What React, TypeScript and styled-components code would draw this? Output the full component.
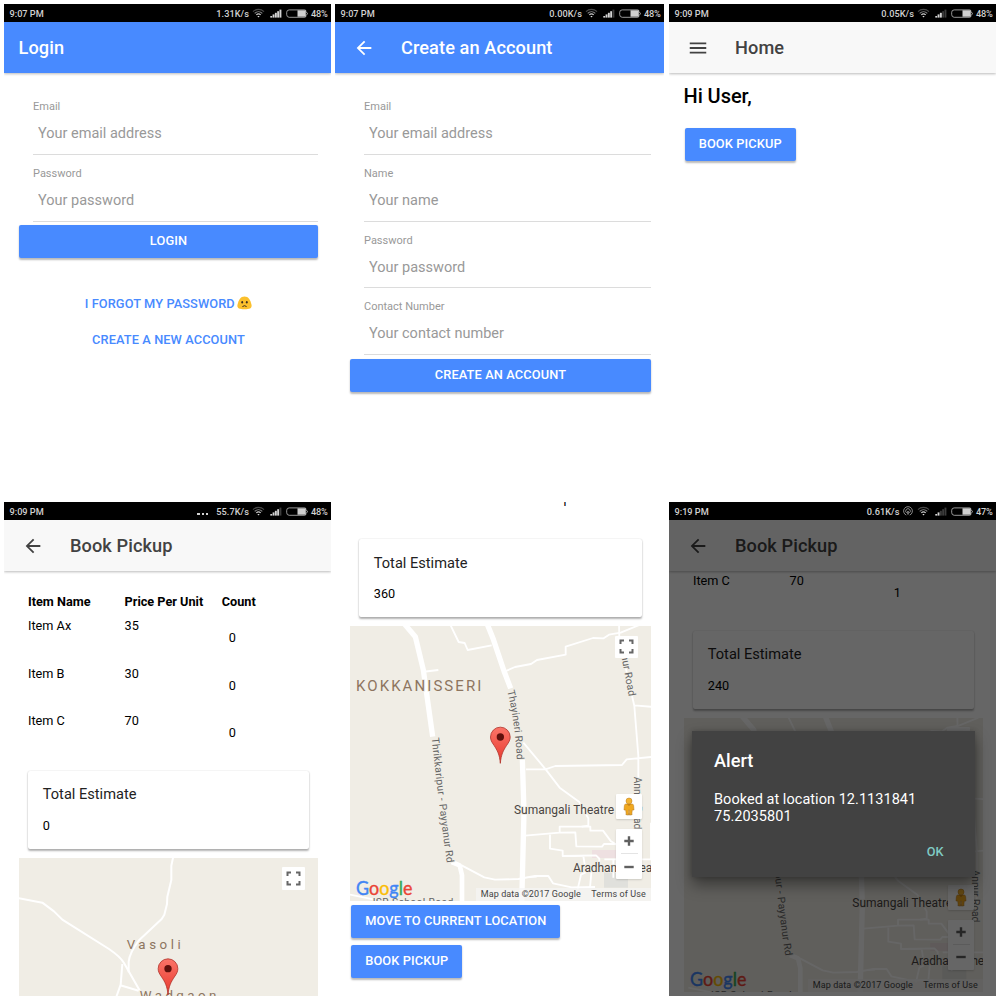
import React from "react";
import styled, { createGlobalStyle, css } from "styled-components";

const GlobalStyle = createGlobalStyle`
  * { box-sizing: border-box; }
  body { margin: 0; background: #fff; font-family: Roboto, "Noto Sans", sans-serif; color: #000; }
`;

const BLUE = "#488aff";

const Board = styled.main`
  width: 1000px;
  height: 1000px;
  padding: 4px;
  overflow: hidden;
  display: grid;
  grid-template-columns: 331px 334px 327px;
  grid-template-rows: 498px 494px;
`;

const Screen = styled.section<{ $w?: number }>`
  position: relative;
  width: ${(p) => p.$w ?? 327}px;
  height: 494px;
  overflow: hidden;
  display: flex;
  flex-direction: column;
  background: #fff;
`;

/* ---------- status bar ---------- */

const StatusRow = styled.div`
  flex: none;
  height: 18px;
  padding: 0 4px 0 5.5px;
  background: #000;
  color: #d2d2d2;
  font-size: 9.2px;
  font-weight: 500;
  line-height: 17px;
  display: flex;
  align-items: center;
`;

const Clock = styled.span`
  flex: 1;
`;

const Dots = styled.span`
  display: flex;
  gap: 2px;
  margin: 5px 8px 0 0;
  i {
    width: 2.4px;
    height: 2px;
    background: #d2d2d2;
  }
`;

const Speed = styled.span`
  margin-right: 3px;
  letter-spacing: 0.05px;
`;

const StatusIcon = styled.svg<{ $gap: number }>`
  flex: none;
  display: block;
  margin-right: ${(p) => p.$gap}px;
`;

const Percent = styled.span`
  width: 16px;
  letter-spacing: -0.2px;
  white-space: nowrap;
`;

type StatusProps = { time: string; speed: string; bars: number; percent: string; dots?: boolean; hotspot?: boolean };

function StatusBar({ time, speed, bars, percent, dots, hotspot }: StatusProps) {
  return (
    <StatusRow>
      <Clock>{time}</Clock>
      {dots && (
        <Dots>
          <i />
          <i />
          <i />
        </Dots>
      )}
      <Speed>{speed}</Speed>
      {hotspot && (
        <StatusIcon $gap={4.5} width="10" height="10" viewBox="0 0 10 10" fill="none" stroke="#aaa" strokeWidth="0.8">
          <path d="M3.3 9.1a4.4 4.4 0 1 1 3.4 0" />
          <path d="M3.7 6.9a2.3 2.3 0 1 1 2.6 0" />
          <path d="M5 5v3.6" strokeWidth="1.3" />
        </StatusIcon>
      )}
      <StatusIcon $gap={5} width="13" height="10" viewBox="0 0 13 10" fill="none" strokeWidth="1.1">
        <path d="M1 3.6a8 8 0 0 1 11 0" stroke="#4a4a4a" />
        <path d="M2.7 5.3a5.6 5.6 0 0 1 7.6 0" stroke="#8a8a8a" />
        <path d="M4.3 6.9a3.3 3.3 0 0 1 4.4 0" stroke="#ccc" />
        <path d="M5.3 7.9h2.4L6.5 9.4z" fill="#ddd" />
      </StatusIcon>
      <StatusIcon $gap={4} width="12" height="9" viewBox="0 0 12 9">
        {[0, 1, 2, 3, 4].map((i) => (
          <rect
            key={i}
            x={i * 2.3 + 0.3}
            y={7 - i * 1.6}
            width="1.9"
            height={1.6 + i * 1.6}
            fill={i < bars ? "#d4d4d4" : "#3c3c3c"}
          />
        ))}
      </StatusIcon>
      <StatusIcon $gap={3} width="22" height="9" viewBox="0 0 22 9">
        <path
          d="M3.2.9h15.6q1 0 1 1v1l1.5 1v1.4l-1.5 1v1q0 1-1 1H3.2Q.7 8.1.7 5.7V3.3Q.7.9 3.2.9z"
          fill="none"
          stroke="#a8a8a8"
          strokeWidth="0.9"
        />
        <rect x="11.5" y="1.3" width="8.3" height="6.4" fill="#d0d0d0" />
      </StatusIcon>
      <Percent>{percent}</Percent>
    </StatusRow>
  );
}

/* ---------- toolbar ---------- */

const Bar = styled.header<{ $primary?: boolean }>`
  flex: none;
  position: relative;
  z-index: 1;
  height: ${(p) => (p.$primary ? 51 : 51.4)}px;
  display: flex;
  align-items: center;
  background: ${(p) => (p.$primary ? BLUE : "#f8f8f8")};
  color: ${(p) => (p.$primary ? "#fff" : "#424242")};
  box-shadow: 0 1px 2.5px rgba(0, 0, 0, 0.27);
`;

const BarIcon = styled.svg`
  width: 22px;
  height: 22px;
  margin: 0 26px 0 18px;
  fill: currentColor;
`;

const Title = styled.h1<{ $inset?: boolean }>`
  margin: 0;
  padding: 0 0 0 ${(p) => (p.$inset ? 14.5 : 0)}px;
  font-size: 18.2px;
  font-weight: 500;
  line-height: 22px;
  letter-spacing: 0.08px;
`;

function Toolbar({ title, icon, primary }: { title: string; icon?: "back" | "menu"; primary?: boolean }) {
  return (
    <Bar $primary={primary}>
      {icon && (
        <BarIcon viewBox="0 0 24 24">
          {icon === "back" ? (
            <path d="M20 11H7.8l5.6-5.6L12 4l-8 8 8 8 1.4-1.4L7.8 13H20z" />
          ) : (
            <path d="M3 18h18v-2H3zm0-5h18v-2H3zm0-7v2h18V6z" />
          )}
        </BarIcon>
      )}
      <Title $inset={!icon}>{title}</Title>
    </Bar>
  );
}

/* ---------- forms and buttons ---------- */

const Form = styled.form`
  padding: 15px 13px 0 15px;
  display: flex;
  flex-direction: column;
`;

const FieldBox = styled.label`
  height: 66.8px;
  margin-left: 14px;
  padding-top: 12px;
  border-bottom: 1px solid #dcdcdc;
  display: flex;
  flex-direction: column;
  color: #999;
  font-size: 11px;
  line-height: 14px;
`;

const Input = styled.input`
  border: 0;
  outline: 0;
  height: 20px;
  margin-top: 9.5px;
  padding: 0 0 0 5px;
  background: none;
  font: 14.5px Roboto, sans-serif;
  &::placeholder {
    color: #999;
  }
`;

function Field({ label, hint }: { label: string; hint: string }) {
  return (
    <FieldBox>
      {label}
      <Input placeholder={hint} />
    </FieldBox>
  );
}

const Button = styled.button<{ $full?: boolean }>`
  border: 0;
  height: 33px;
  padding: 0 13.8px 1px;
  border-radius: 2px;
  background: ${BLUE};
  color: #fff;
  font: 500 12.8px/32px Roboto, sans-serif;
  letter-spacing: 0.13px;
  box-shadow: 0 1.5px 2px rgba(0, 0, 0, 0.28);
  white-space: nowrap;
  ${(p) =>
    p.$full
      ? css`
          margin-top: 3.5px;
        `
      : css`
          display: block;
          margin: 0 0 7px 1.4px;
        `}
`;

const Links = styled.nav`
  margin-top: 27px;
  display: flex;
  flex-direction: column;
  align-items: center;
`;

const TextLink = styled.a`
  height: 36.5px;
  display: flex;
  align-items: center;
  gap: 2.5px;
  color: ${BLUE};
  font-size: 12.8px;
  font-weight: 500;
  letter-spacing: 0.09px;
`;

function SadFace() {
  return (
    <svg width="15" height="14" viewBox="0 0 15 14">
      <path d="M7.5.5C3.500.5 1.700 4 .6 8.200-.3 11.800 1.300 13.300 7.500 13.300s7.800-1.500 6.900-5.100C13.300 4 11.500.5 7.500.5z" fill="#fbc02d" />
      <ellipse cx="5.2" cy="6.2" rx="0.9" ry="1.2" fill="#3a2b1f" />
      <ellipse cx="9.8" cy="6.2" rx="0.9" ry="1.2" fill="#3a2b1f" />
      <path d="M5.400 10.600q2.100-1.800 4.200 0" fill="none" stroke="#3a2b1f" strokeWidth="1" />
    </svg>
  );
}

/* ---------- pickup page ---------- */

const HomeBody = styled.div`
  padding: 11px 14.5px;
`;

const Greeting = styled.h2`
  margin: 0 0 19.3px;
  font-size: 20px;
  font-weight: 500;
  line-height: 24px;
  letter-spacing: -0.05px;
`;

const Page = styled.div<{ $shift: number }>`
  margin-top: ${(p) => p.$shift}px;
  padding: 0 13px 0 15px;
`;

const ItemRow = styled.div<{ $head?: boolean }>`
  display: grid;
  grid-template-columns: 33.3% 33.5% 1fr;
  height: ${(p) => (p.$head ? 24 : 47.6)}px;
  padding-left: 9px;
  font-size: 12.7px;
  font-weight: ${(p) => (p.$head ? 700 : 400)};
  line-height: 24px;
  white-space: nowrap;
`;

const Count = styled.span`
  padding: 12px 0 0 7px;
`;

function Item({ name, price, count }: { name: string; price: number; count: number }) {
  return (
    <ItemRow>
      <span>{name}</span>
      <span>{price}</span>
      <Count>{count}</Count>
    </ItemRow>
  );
}

const CardBox = styled.article`
  height: 78px;
  margin: 14px 9px 9px;
  padding: 13.4px 14.8px;
  border-radius: 2px;
  background: #fff;
  box-shadow: 0 1.5px 2px rgba(0, 0, 0, 0.3), 0 0 1.5px rgba(0, 0, 0, 0.12);
`;

const CardTitle = styled.h3`
  margin: 0 0 12.8px;
  font-size: 14.6px;
  font-weight: 400;
  line-height: 20px;
  color: #222;
`;

const CardValue = styled.p`
  margin: 0;
  font-size: 12.7px;
  line-height: 18px;
`;

function Estimate({ value }: { value: number }) {
  return (
    <CardBox>
      <CardTitle>Total Estimate</CardTitle>
      <CardValue>{value}</CardValue>
    </CardBox>
  );
}

/* ---------- maps ---------- */

const MapFrame = styled.div<{ $h: number; $mb?: number }>`
  position: relative;
  height: ${(p) => p.$h}px;
  margin-bottom: ${(p) => p.$mb ?? 0}px;
  overflow: hidden;
  background: #f0ede5;
  > svg {
    display: block;
  }
`;

const Control = styled.div`
  background: #fff;
  border-radius: 1px;
  box-shadow: 0 1px 2px rgba(0, 0, 0, 0.15);
  display: flex;
  flex-direction: column;
  align-items: center;
  justify-content: center;
`;

const Fullscreen = styled(Control)`
  position: absolute;
  top: 9.5px;
  right: 13px;
  width: 23px;
  height: 22.5px;
  box-shadow: none;
`;

const ControlStack = styled.div`
  position: absolute;
  right: 9px;
  bottom: 22px;
  width: 26px;
  display: flex;
  flex-direction: column;
  gap: 10px;
`;

const Pegman = styled(Control)`
  height: 25px;
`;

const Zoom = styled(Control)`
  height: 50px;
`;

const ZoomHalf = styled.span<{ $line?: boolean }>`
  width: 17px;
  height: 25px;
  display: flex;
  align-items: center;
  justify-content: center;
  border-bottom: ${(p) => (p.$line ? "1px solid #e4e4e4" : "0")};
`;

const Credits = styled.div`
  position: absolute;
  right: 0;
  bottom: 0;
  height: 13px;
  padding: 0 5.2px 0 5px;
  background: rgba(245, 245, 245, 0.7);
  color: #444;
  font-size: 9px;
  line-height: 13px;
  letter-spacing: 0.1px;
  display: flex;
  gap: 10.5px;
  white-space: nowrap;
`;

const Logo = styled.svg`
  position: absolute;
  left: 5px;
  bottom: 0;
`;

const label = { fontFamily: "Roboto, sans-serif", stroke: "#f0ede5", strokeWidth: 5, paintOrder: "stroke" as const };

function Pin({ x, y }: { x: number; y: number }) {
  return (
    <g transform={`translate(${x} ${y})`}>
      <path
        d="M0 79C-2 53-9 40-19 25-26 15-29.500 9-29.500 0a29.500 29.500 0 0 1 59 0C29.500 9 26 15 19 25 9 40 2 53 0 79z"
        fill="url(#pin)"
        stroke="#b2352c"
        strokeWidth="2.5"
      />
      <circle r="11" fill="#5f100c" />
      <defs>
        <linearGradient id="pin" x1="0" y1="0" x2="0" y2="1">
          <stop offset="0" stopColor="#fb7468" />
          <stop offset="1" stopColor="#e8382d" />
        </linearGradient>
      </defs>
    </g>
  );
}

function FullscreenControl() {
  return (
    <Fullscreen>
      <svg width="15" height="15" viewBox="0 0 15 15" fill="none" stroke="#666" strokeWidth="2">
        <path d="M1.500 5V1.500H5M10 1.500h3.500V5M13.500 10v3.500H10M5 13.500H1.500V10" />
      </svg>
    </Fullscreen>
  );
}

function TownMap({ id, height, dx, dy, gap }: { id: string; height: number; dx: number; dy: number; gap?: number }) {
  return (
    <MapFrame $h={height} $mb={gap}>
      <svg width="301" height="275" viewBox="0 0 903 825">
        <g transform={`translate(${dx} ${dy})`}>
          <path d="M726 672h110v24H726z" fill="#eee0e1" />
          <path d="M762 735h72v50h-72z" fill="#e0e0dc" />
          <g fill="none" stroke="#fff" strokeWidth="5.5" strokeLinejoin="round">
            <path d="M215 138l50-6M298-10l28 58 18 3 9 21 72-14M465 136l30-13 48-9 18-12 86-16V62l82-26 32 1 16-11 35-6 58-24" />
            <path d="M807-10l1 50 45 200 12 150v160l-4 60M853 238l60 5M528 430h58l30-10 200-3 14-17 83-8M520 350l67 80 42 55 58 42 28 50v22l-20 3" />
            <path d="M525 629l104-9v-18h92v12h38l24 32 26 16M629 620l47-1 3 42 77 1 6-8h50M600 626v42l38 6v16l100-2 10 10v30M720 785l5-55-32 16-10 44M903 590v110h-140M668 690h32l4 25" />
            <path d="M335 718l68 36 32 7 70-2 50-9h40l14 22 56 12 70-1M0 806l70 14M560 752l-38 3M790 700v55" />
          </g>
          <g fill="none" stroke="#fff" strokeLinejoin="round">
            <path d="M160-10l36 42 24 100 28 200" strokeWidth="16" />
            <path d="M408-15l22 55 32 95 20 52M517 398l5 160-7 280" strokeWidth="16" />
            <path d="M305 708l24 10 7 30v100" strokeWidth="14" />
          </g>
          <g fill="#666" fontSize="31" {...label}>
            <path id={`${id}-a`} d="M245 336Q255 430 267 530T291 714" fill="none" stroke="none" />
            <path id={`${id}-b`} d="M472 195Q495 290 501 404" fill="none" stroke="none" />
            <path id={`${id}-c`} d="M807 50L837 216" fill="none" stroke="none" />
            <path id={`${id}-d`} d="M851 452L851 616" fill="none" stroke="none" />
            <text textLength="378">
              <textPath href={`#${id}-a`}>Thrikkaripur - Payyanur Rd</textPath>
            </text>
            <text textLength="209">
              <textPath href={`#${id}-b`}>Thayineri Road</textPath>
            </text>
            <text textLength="164">
              <textPath href={`#${id}-c`}>Annur Road</textPath>
            </text>
            <text textLength="158">
              <textPath href={`#${id}-d`}>Annur Road</textPath>
            </text>
            <text x="68" y="840" textLength="242">ISR School Road</text>
          </g>
          <text x="18" y="195" fill="#8d755f" fontSize="45" textLength="376" {...label}>KOKKANISSERI</text>
          <g fill="#4a4542" fontSize="36" {...label}>
            <text x="492" y="564" textLength="300">Sumangali Theatre</text>
            <text x="669" y="737" textLength="238">Aradhana Thea</text>
          </g>
          <Pin x={451} y={333} />
        </g>
      </svg>
      <FullscreenControl />
      <ControlStack>
        <Pegman>
          <svg width="12" height="19" viewBox="0 0 12 19">
            <ellipse cx="6" cy="17.3" rx="3.5" ry="1" fill="#c9b48a" />
            <path d="M3 7h6q1.500 0 1.600 1.500l.4 4.500H9.300l-.6 4.800H6.400V13h-.8v4.800H3.300L2.700 13H1l.4-4.500Q1.500 7 3 7z" fill="#f0a81f" stroke="#b9791a" strokeWidth="0.5" />
            <circle cx="6" cy="4" r="3" fill="#f4b431" stroke="#b9791a" strokeWidth="0.5" />
            <path d="M4 7.300h4L6 9z" fill="#c17d15" />
          </svg>
        </Pegman>
        <Zoom>
          <ZoomHalf $line>
            <svg width="10" height="10" viewBox="0 0 10 10" stroke="#606060" strokeWidth="2.4">
              <path d="M5 .3v9.400M.3 5h9.400" />
            </svg>
          </ZoomHalf>
          <ZoomHalf>
            <svg width="10" height="10" viewBox="0 0 10 10" stroke="#606060" strokeWidth="2.4">
              <path d="M.3 5h9.400" />
            </svg>
          </ZoomHalf>
        </Zoom>
      </ControlStack>
      <Credits>
        <span>Map data ©2017 Google</span>
        <span>Terms of Use</span>
      </Credits>
      <Logo width="60" height="24" viewBox="0 0 180 72">
        <text x="3" y="53" fontFamily="Lato, sans-serif" fontSize="58" textLength="169" lengthAdjust="spacingAndGlyphs" strokeWidth="1.2">
          <tspan fill="#4285f4" stroke="#4285f4">G</tspan>
          <tspan fill="#ea4335" stroke="#ea4335">o</tspan>
          <tspan fill="#fbbc05" stroke="#fbbc05">o</tspan>
          <tspan fill="#4285f4" stroke="#4285f4">g</tspan>
          <tspan fill="#34a853" stroke="#34a853">l</tspan>
          <tspan fill="#ea4335" stroke="#ea4335">e</tspan>
        </text>
      </Logo>
    </MapFrame>
  );
}

function VillageMap() {
  return (
    <MapFrame $h={275}>
      <svg width="299" height="275" viewBox="0 0 897 825">
        <g fill="none" stroke="#fff" strokeWidth="6" strokeLinejoin="round">
          <path d="M463-5l-6 28v43l-12 50-1 22-8 32-8 13-68 64q-28 36-31 64v32" />
          <path d="M-5 120l75 14 35 26 25 25 140 88q35 24 45 42l48 84" />
          <path d="M310 318l-5 62-16 45M304 382l55 16" />
        </g>
        <g fill="#8d755f" fontSize="40" {...label}>
          <text x="323" y="272" textLength="162">Vasoli</text>
          <text x="362" y="427" textLength="230">Wadgaon</text>
        </g>
        <Pin x={447} y={332} />
      </svg>
      <FullscreenControl />
    </MapFrame>
  );
}

/* ---------- alert ---------- */

const Backdrop = styled.div`
  position: absolute;
  inset: 18px 0 0 0;
  z-index: 2;
  padding: 211px 21px 0 23px;
  background: rgba(0, 0, 0, 0.6);
`;

const Dialog = styled.div`
  height: 146px;
  padding: 19px 22px;
  background: #424242;
  color: #fff;
  box-shadow: 0 8px 14px rgba(0, 0, 0, 0.4), 0 0 5px rgba(0, 0, 0, 0.2);
  display: flex;
  flex-direction: column;
`;

const DialogTitle = styled.h2`
  margin: 0 0 18.7px;
  font-size: 18.2px;
  font-weight: 500;
  line-height: 22px;
`;

const Message = styled.p`
  margin: 0;
  width: 215px;
  font-size: 14.5px;
  line-height: 17.4px;
  letter-spacing: 0.04px;
`;

const Confirm = styled.button`
  align-self: flex-end;
  margin: 18px 9.5px 0 0;
  padding: 0;
  border: 0;
  background: none;
  color: #80cbc4;
  font: 500 12.7px/16px Roboto, sans-serif;
`;

export default function App() {
  return (
    <>
      <GlobalStyle />
      <Board>
        <Screen>
          <StatusBar time="9:07 PM" speed="1.31K/s" bars={5} percent="48%" />
          <Toolbar title="Login" primary />
          <Form>
            <Field label="Email" hint="Your email address" />
            <Field label="Password" hint="Your password" />
            <Button type="button" $full>LOGIN</Button>
            <Links>
              <TextLink>
                I FORGOT MY PASSWORD <SadFace />
              </TextLink>
              <TextLink>CREATE A NEW ACCOUNT</TextLink>
            </Links>
          </Form>
        </Screen>

        <Screen $w={329}>
          <StatusBar time="9:07 PM" speed="0.00K/s" bars={4} percent="48%" />
          <Toolbar title="Create an Account" icon="back" primary />
          <Form>
            <Field label="Email" hint="Your email address" />
            <Field label="Name" hint="Your name" />
            <Field label="Password" hint="Your password" />
            <Field label="Contact Number" hint="Your contact number" />
            <Button type="button" $full>CREATE AN ACCOUNT</Button>
          </Form>
        </Screen>

        <Screen>
          <StatusBar time="9:09 PM" speed="0.05K/s" bars={3} percent="48%" />
          <Toolbar title="Home" icon="menu" />
          <HomeBody>
            <Greeting>Hi User,</Greeting>
            <Button>BOOK PICKUP</Button>
          </HomeBody>
        </Screen>

        <Screen>
          <StatusBar time="9:09 PM" speed="55.7K/s" bars={4} percent="48%" dots />
          <Toolbar title="Book Pickup" icon="back" />
          <Page $shift={18.6}>
            <ItemRow $head>
              <span>Item Name</span>
              <span>Price Per Unit</span>
              <span>Count</span>
            </ItemRow>
            <Item name="Item Ax" price={35} count={0} />
            <Item name="Item B" price={30} count={0} />
            <Item name="Item C" price={70} count={0} />
            <Estimate value={0} />
            <VillageMap />
          </Page>
        </Screen>

        <Screen $w={329}>
          <Page $shift={-24.4}>
            <Item name="Item C" price={70} count={1} />
            <Estimate value={360} />
            <TownMap id="east" height={275} dx={0} dy={0} gap={3.5} />
            <Button>MOVE TO CURRENT LOCATION</Button>
            <Button>BOOK PICKUP</Button>
          </Page>
        </Screen>

        <Screen>
          <StatusBar time="9:19 PM" speed="0.61K/s" bars={2} percent="47%" hotspot />
          <Toolbar title="Book Pickup" icon="back" />
          <Page $shift={-2.4}>
            <Item name="Item C" price={70} count={1} />
            <Estimate value={240} />
            <TownMap id="west" height={274} dx={13} dy={3} />
          </Page>
          <Backdrop>
            <Dialog role="alertdialog">
              <DialogTitle>Alert</DialogTitle>
              <Message>Booked at location 12.1131841 75.2035801</Message>
              <Confirm>OK</Confirm>
            </Dialog>
          </Backdrop>
        </Screen>
      </Board>
    </>
  );
}
